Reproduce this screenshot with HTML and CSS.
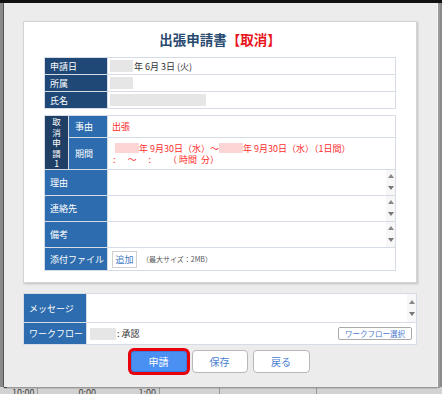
FILE: index.html
```html
<!DOCTYPE html>
<html lang="ja">
<head>
    <meta charset="UTF-8">
    <meta name="viewport" content="width=device-width, initial-scale=1.0">
    <title>出張申請書</title>
    <link rel="stylesheet" href="styles.css">
</head>
<body>
    <div class="topbar"></div>
    <div class="screen">
        <div class="dialog">
            <div class="card">
                <h1 class="title">出張申請書<span class="cancel">【取消】</span></h1>
                <div class="grid info">
                    <div class="lbl dark">申請日</div>
                    <div class="val"><span class="mask w23"></span>年 6月 3日 (火)</div>
                    <div class="lbl dark">所属</div>
                    <div class="val"><span class="mask w23"></span></div>
                    <div class="lbl dark">氏名</div>
                    <div class="val"><span class="mask w96"></span></div>
                </div>
                <div class="grid detail">
                    <div class="lbl group"><span>取</span><span>消</span><span>申</span><span>請</span><span>1</span></div>
                    <div class="lbl sub">事由</div>
                    <div class="val red pad">出張</div>
                    <div class="lbl sub">期間</div>
                    <div class="val red period">
                        <div><span class="pink"></span>年 9月30日（水）～<span class="pink"></span>年 9月30日（水）（1日間）</div>
                        <div><span>:</span><span class="g1">～</span><span class="g2">:</span><span class="g3">（ 時間&nbsp; 分）</span></div>
                    </div>
                    <div class="lbl span2">理由</div>
                    <div class="val area"><div class="scroll"><i class="up"></i><i class="down"></i></div></div>
                    <div class="lbl span2">連絡先</div>
                    <div class="val area"><div class="scroll"><i class="up"></i><i class="down"></i></div></div>
                    <div class="lbl span2">備考</div>
                    <div class="val area"><div class="scroll"><i class="up"></i><i class="down"></i></div></div>
                    <div class="lbl span2">添付ファイル</div>
                    <div class="val"><button class="btn-add">追加</button><span class="note">（最大サイズ：2MB）</span></div>
                </div>
            </div>
            <div class="grid message">
                <div class="lbl">メッセージ</div>
                <div class="val area"><div class="scroll tall"><i class="up"></i><i class="down"></i></div></div>
                <div class="lbl">ワークフロー</div>
                <div class="val flow"><span class="mask w26"></span>: 承認<button class="btn-flow">ワークフロー選択</button></div>
            </div>
            <div class="actions">
                <button class="btn primary">申請</button>
                <button class="btn">保存</button>
                <button class="btn wide">戻る</button>
            </div>
        </div>
        <div class="page-row">
            <span class="cell c1">10:00</span>
            <span class="cell c2">0:00</span>
            <span class="cell c3">1:00</span>
            <span class="cell c4"></span>
            <span class="cell c5"></span>
        </div>
    </div>
</body>
</html>
```

FILE: styles.css
```css
body {
    margin: 0;
    font-family: "Noto Sans CJK JP", "Noto Sans", sans-serif;
    font-size: 9px;
    color: #333;
    background: #8a8a8a;
}
.topbar {
    height: 3px;
    background: #111;
}
.screen {
    height: 391px;
    display: flex;
    flex-direction: column;
    background: #8a8a8a;
    overflow: hidden;
}
.dialog {
    position: relative;
    z-index: 1;
    width: 433px;
    height: 384px;
    margin-left: 4px;
    box-sizing: border-box;
    padding: 18px 20px 0 19px;
    background: #ececec;
    box-shadow: -1px 0 0 #555, 1px 0 0 #f6f6f6, 3px 1px 0 #9a9a9a, 0 1px 1px #444;
}
.card {
    background: #fff;
    border: 1px solid #d4d4d4;
    box-shadow: 1px 1px 2px rgba(0, 0, 0, 0.2);
    padding: 7px 20px 11px;
}
.title {
    margin: 0 0 8px;
    font-size: 13.5px;
    line-height: 20px;
    text-align: center;
    color: #27496f;
}
.cancel {
    color: #e8141a;
}
.grid {
    display: grid;
    gap: 1px;
    background: #d5dce6;
    border: 1px solid #d5dce6;
}
.info {
    grid-template-columns: 62px 1fr;
    grid-template-rows: repeat(3, 16px);
}
.detail {
    margin-top: 6px;
    grid-template-columns: 23px 38px 1fr;
    grid-template-rows: 21px 31px 25px 25px 25px 22px;
}
.message {
    margin-top: 10px;
    grid-template-columns: 62px 1fr;
    grid-template-rows: 28px 21px;
}
.lbl {
    display: flex;
    align-items: center;
    padding-left: 5px;
    background: #2d6cae;
    color: #fff;
    white-space: nowrap;
}
.lbl.dark {
    background: #1f4876;
}
.lbl.group {
    grid-row: span 2;
    flex-direction: column;
    justify-content: center;
    padding: 0;
    font-size: 8.5px;
    line-height: 10.4px;
    background: #1f3f67;
}
.lbl.sub {
    padding-left: 6px;
}
.span2 {
    grid-column: span 2;
}
.val {
    display: flex;
    align-items: center;
    padding-left: 2px;
    background: #fff;
    white-space: nowrap;
}
.val.pad {
    padding-left: 4px;
}
.red {
    color: #ff2d2d;
}
.mask {
    display: inline-block;
    height: 12px;
    margin-right: 1px;
    background: #e6e6e6;
}
.w23 { width: 23px; }
.w26 { width: 26px; }
.w96 { width: 96px; }
.period {
    flex-direction: column;
    align-items: flex-start;
    justify-content: center;
    padding-left: 5px;
    line-height: 11px;
}
.pink {
    display: inline-block;
    width: 24px;
    height: 10px;
    vertical-align: -1px;
    background: #fdd5d5;
}
.period .pink:first-child {
    margin-left: 2px;
}
.g1 { margin-left: 12px; }
.g2 { margin-left: 12px; }
.g3 { margin-left: 17px; }
.area {
    align-items: stretch;
    justify-content: flex-end;
    padding: 0;
}
.scroll {
    width: 9px;
    display: flex;
    flex-direction: column;
    justify-content: space-between;
    align-items: center;
    padding: 4px 0 5px;
    background: #f7f7f7;
}
.scroll.tall {
    padding: 6px 0;
}
.up, .down {
    width: 0;
    height: 0;
    border-left: 3px solid transparent;
    border-right: 3px solid transparent;
}
.up {
    border-bottom: 4px solid #888;
}
.down {
    border-top: 4px solid #777;
}
.btn-add {
    width: 25px;
    height: 17px;
    margin-left: 2px;
    padding: 0;
    border: 1px solid #d0d0d0;
    background: #fff;
    color: #3f78c6;
    font-family: inherit;
    font-size: 9px;
}
.note {
    margin-left: 5px;
    font-size: 7px;
    color: #555;
}
.flow {
    padding-left: 3px;
}
.btn-flow {
    margin-left: auto;
    margin-right: 4px;
    width: 74px;
    height: 13px;
    padding: 0;
    border: 1px solid #aaa;
    border-radius: 2px;
    background: #fff;
    color: #4a7ad0;
    font-family: inherit;
    font-size: 7.5px;
    line-height: 11px;
}
.actions {
    display: flex;
    justify-content: center;
    align-items: center;
    gap: 5px;
    height: 23px;
    margin-top: 5px;
}
.btn {
    width: 56px;
    height: 23px;
    padding: 0;
    border: 1px solid #b8b8b8;
    border-radius: 4px;
    background: #fff;
    color: #4a80d4;
    font-family: inherit;
    font-size: 10px;
}
.btn.wide {
    width: 57px;
}
.btn.primary {
    height: 21px;
    border-color: #3b7de0;
    border-radius: 3px;
    background: #4a8ff2;
    color: #fff;
    box-shadow: 0 0 0 3px #e8000b;
}
.page-row {
    display: flex;
    height: 7px;
    background: #d2d2d2;
    color: #444;
    line-height: 12px;
}
.cell {
    box-sizing: border-box;
    height: 12px;
}
.c1 { width: 38px; padding-left: 12px; border-right: 1px solid #999; }
.c2 { width: 61px; text-align: right; padding-right: 3px; }
.c3 { width: 61px; text-align: right; padding-right: 3px; border-right: 1px solid #999; }
.c4 { width: 60px; border-right: 1px solid #999; }
.c5 { width: 97px; border-right: 1px solid #999; }
```
